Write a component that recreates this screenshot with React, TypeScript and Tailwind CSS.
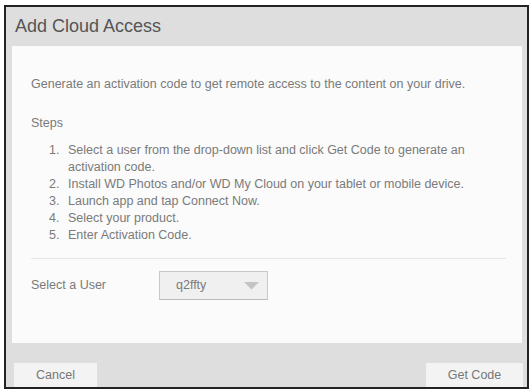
import React from "react";

export default function App() {
  const steps = [
    "Select a user from the drop-down list and click Get Code to generate an activation code.",
    "Install WD Photos and/or WD My Cloud on your tablet or mobile device.",
    "Launch app and tap Connect Now.",
    "Select your product.",
    "Enter Activation Code.",
  ];
  return (
    <div className="w-[531px] h-[390px] bg-white pt-[5px] pl-[4px]" style={{ fontFamily: '"Liberation Sans", Arial, sans-serif' }}>
      <div className="w-[525px] h-[384px] border-2 border-[#222] bg-[#dedede] flex flex-col">
        <div className="h-[39px] flex items-center px-[9px] text-[18px] text-[#555]">Add Cloud Access</div>
        <div className="ml-[6px] mr-[5px] h-[297px] bg-[#fbfbfb] pl-[19px] pr-[16px] pt-[31px] text-[12.5px] text-[#7a7a7a]">
          <div className="leading-[15px]">Generate an activation code to get remote access to the content on your drive.</div>
          <div className="mt-[24px] leading-[15px]">Steps</div>
          <ol className="mt-[11px] pl-[18px] leading-[17px]">
            {steps.map((s, i) => (
              <li key={i} className="flex">
                <span className="w-[19px] shrink-0">{i + 1}.</span>
                <span className="pr-[30px]">{s}</span>
              </li>
            ))}
          </ol>
          <div className="mt-[14px] border-t border-[#e6e6e6]" />
          <div className="mt-[12px] flex items-center">
            <span className="w-[128px]">Select a User</span>
            <div className="w-[109px] h-[29px] border border-[#c8c8c8] border-b-[#b8b8b8] bg-[#f0f0f0] flex items-center justify-between pl-[16px] pr-[8px]">
              <span>q2ffty</span>
              <svg width="15" height="8" viewBox="0 0 15 8"><path d="M0 0 L15 0 L7.5 7.5 Z" fill="#c4c4c4" /></svg>
            </div>
          </div>
        </div>
        <div className="flex-1 flex items-end justify-between pl-[8px] pr-[4px]">
          <button className="w-[83px] h-[24px] bg-[#f3f3f3] text-[12.5px] text-[#777] flex items-center justify-center">Cancel</button>
          <button className="w-[97px] h-[24px] bg-[#f3f3f3] text-[12.5px] text-[#777] flex items-center justify-center">Get Code</button>
        </div>
      </div>
    </div>
  );
}
